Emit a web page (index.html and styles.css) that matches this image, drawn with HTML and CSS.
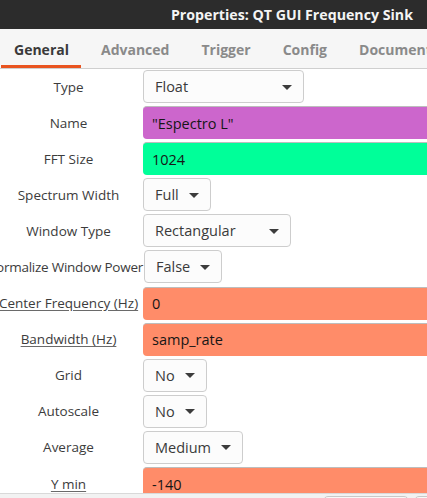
FILE: index.html
```html
<!DOCTYPE html>
<html>
<head>
<meta charset="utf-8">
<link rel="stylesheet" href="styles.css">
</head>
<body>
<div class="window">
  <div class="titlebar"><span class="title">Properties: QT GUI Frequency Sink</span></div>
  <div class="tabs">
    <div class="tab active">General</div>
    <div class="tab">Advanced</div>
    <div class="tab">Trigger</div>
    <div class="tab">Config</div>
    <div class="tab">Documentation</div>
  </div>
  <div class="content">
    <div class="grid">
      <div class="label">Type</div>
      <div class="cell"><div class="combo w-type"><span>Float</span><i class="arrow"></i></div></div>

      <div class="label">Name</div>
      <div class="cell"><div class="entry string">"Espectro L"</div></div>

      <div class="label">FFT Size</div>
      <div class="cell"><div class="entry int">1024</div></div>

      <div class="label">Spectrum Width</div>
      <div class="cell"><div class="combo"><span>Full</span><i class="arrow"></i></div></div>

      <div class="label">Window Type</div>
      <div class="cell"><div class="combo w-window"><span>Rectangular</span><i class="arrow"></i></div></div>

      <div class="label wide-label"><span>Normalize Window Power</span></div>
      <div class="cell shifted"><div class="combo"><span>False</span><i class="arrow"></i></div></div>

      <div class="label"><u>Center Frequency (Hz)</u></div>
      <div class="cell"><div class="entry float">0</div></div>

      <div class="label"><u>Bandwidth (Hz)</u></div>
      <div class="cell"><div class="entry float">samp_rate</div></div>

      <div class="label">Grid</div>
      <div class="cell"><div class="combo"><span>No</span><i class="arrow"></i></div></div>

      <div class="label">Autoscale</div>
      <div class="cell"><div class="combo"><span>No</span><i class="arrow"></i></div></div>

      <div class="label">Average</div>
      <div class="cell"><div class="combo"><span>Medium</span><i class="arrow"></i></div></div>

      <div class="label"><u>Y min</u></div>
      <div class="cell"><div class="entry float">-140</div></div>
    </div>
  </div>
  <div class="footer">
    <div class="btn b1"></div>
    <div class="btn b2"></div>
  </div>
</div>
</body>
</html>
```

FILE: styles.css
```css
html, body {
  margin: 0;
  padding: 0;
  background: #ffffff;
}
.window {
  width: 427px;
  height: 498px;
  overflow: hidden;
  font-family: "Open Sans", "Noto Sans", "DejaVu Sans", sans-serif;
  display: flex;
  flex-direction: column;
}
.titlebar {
  height: 29px;
  flex: none;
  background: #2c2c2c;
  color: #f4f4f4;
  display: flex;
  align-items: center;
  justify-content: flex-end;
  padding-right: 14px;
  font-weight: 700;
  font-size: 14.2px;
  white-space: nowrap;
}
.tabs {
  height: 39px;
  flex: none;
  background: #f6f6f6;
  border-bottom: 1px solid #cfcfcf;
  display: flex;
  align-items: stretch;
  gap: 7px;
  white-space: nowrap;
  padding-left: 1px;
}
.tab {
  position: relative;
  display: flex;
  align-items: center;
  padding: 2px 12px 0 13px;
  font-weight: 700;
  font-size: 14px;
  color: #8a8a8a;
}
.tab.active {
  color: #3a3a3a;
}
.tab.active::after {
  content: "";
  position: absolute;
  left: 0;
  right: 0;
  bottom: 0;
  height: 3px;
  background: #e95420;
}
.content {
  flex: none;
  overflow: hidden;
  border-bottom: 1px solid #d9d9d9;
  padding-top: 1px;
  box-sizing: border-box;
  height: 425px;
}
.grid {
  display: grid;
  grid-template-columns: 137px 1fr;
  grid-auto-rows: 33px;
  column-gap: 6px;
  row-gap: 3.1px;
}
.label {
  display: flex;
  align-items: center;
  justify-content: center;
  white-space: nowrap;
  font-size: 13.5px;
  color: #3c3c3c;
  min-width: 0;
}
.label.wide-label {
  justify-content: flex-end;
  letter-spacing: -0.25px;
  margin-right: -6px;
}
.label u {
  text-decoration-color: #6a6a6a;
  text-underline-offset: 2px;
}
.cell {
  display: flex;
  align-items: stretch;
  min-width: 0;
}
.cell.shifted {
  padding-left: 1px;
}
.combo {
  box-sizing: border-box;
  height: 33px;
  display: flex;
  align-items: center;
  justify-content: space-between;
  gap: 10px;
  padding: 0 11px 0 11px;
  border: 1px solid #cdcdcd;
  border-radius: 4px;
  background: #fcfcfc;
  color: #3a3a3a;
  font-size: 14.5px;
}
.combo.w-type { width: 161px; }
.combo.w-window { width: 148px; }
.arrow {
  width: 0;
  height: 0;
  border-left: 5px solid transparent;
  border-right: 5px solid transparent;
  border-top: 5px solid #3c3c3c;
  margin-top: 1px;
}
.entry {
  box-sizing: border-box;
  height: 33px;
  width: calc(100% + 40px);
  flex: none;
  display: flex;
  align-items: center;
  padding-left: 9px;
  border-top: 1px solid #bdbdbd;
  border-radius: 4px 0 0 4px;
  color: #161616;
  font-size: 14.5px;
  white-space: nowrap;
}
.entry.string { background: #cc66cc; }
.entry.int { background: #00ff99; }
.entry.float { background: #ff8c69; }
.footer {
  flex: 1;
  background: #f2f2f2;
  display: flex;
  gap: 5px;
  padding: 2px 0 0 323px;
}
.btn {
  height: 30px;
  border: 1px solid #c8c8c8;
  border-radius: 5px;
  background: #f8f8f8;
  flex: none;
}
.b1 { width: 84px; }
.b2 { width: 84px; }
```
